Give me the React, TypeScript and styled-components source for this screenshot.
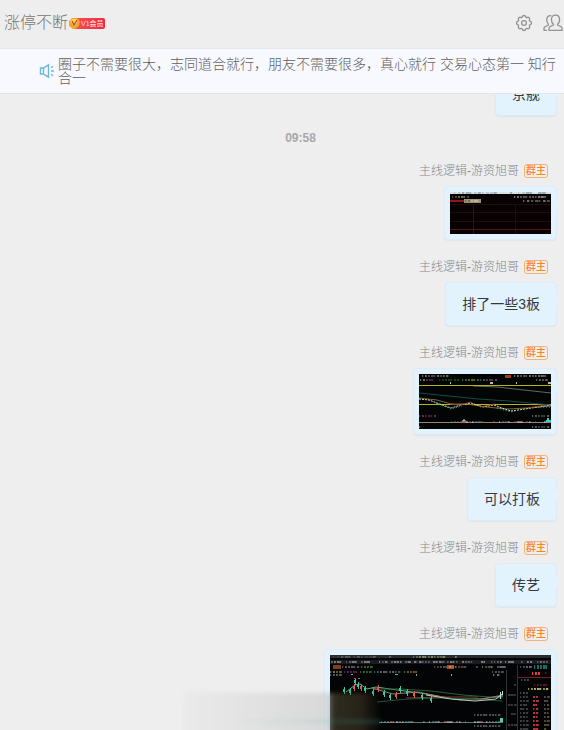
import React from "react";
import styled, { createGlobalStyle } from "styled-components";

const Global = createGlobalStyle`
  * { box-sizing: border-box; }
  body {
    margin: 0;
    background: #eeeeee;
    font-family: "Liberation Sans", "Noto Sans CJK SC", sans-serif;
  }
`;

const Page = styled.main`
  display: flex;
  flex-direction: column;
  height: 100vh;
  overflow: hidden;
`;

const Header = styled.header`
  display: flex;
  align-items: center;
  flex: none;
  height: 48px;
  padding: 0 1px 2px 4px;
`;

const Title = styled.h1`
  margin: 0;
  color: #757575;
  font-size: 16px;
  font-weight: 300;
  line-height: 24px;
`;

const Tools = styled.div`
  display: flex;
  align-items: center;
  gap: 10px;
  margin-left: auto;
`;

const IconButton = styled.button`
  display: flex;
  padding: 0;
  border: 0;
  background: none;
  color: #939393;
  cursor: pointer;
`;

const Vip = styled.span`
  display: flex;
  align-items: center;
  height: 11px;
  margin-left: 4px;
  padding: 0 1px 0 9px;
  border-radius: 2px;
  background: linear-gradient(90deg, #f8564a, #ee2746);
  color: #ffd9d6;
  font-size: 7px;
  font-weight: 500;
  line-height: 11px;
  position: relative;
`;

const VipCoin = styled.svg`
  position: absolute;
  left: -4px;
  top: 0;
`;

const Notice = styled.section`
  display: flex;
  align-items: center;
  flex: none;
  gap: 3px;
  min-height: 46px;
  padding: 0 4px 0 39px;
  border-top: 1px solid #e4e7f0;
  border-bottom: 1px solid #e2e5ec;
  background: #f8f9fe;
  color: #606060;
  font-size: 14px;
  font-weight: 300;
  line-height: 14px;

  svg { flex: none; }
  p { margin: 0; }
`;

const Feed = styled.section`
  flex: 1;
  min-height: 0;
  overflow: hidden;
`;

const Messages = styled.div`
  display: flex;
  flex-direction: column;
  align-items: flex-end;
  margin-top: -22px;
  padding-right: 7px;
`;

const Time = styled.time`
  align-self: center;
  margin: 12px 0 13px 44px;
  color: #a8a8aa;
  font-size: 12px;
  font-weight: 700;
  line-height: 20px;
`;

const Message = styled.article`
  display: flex;
  flex-direction: column;
  align-items: flex-end;
  margin-bottom: 17px;
`;

const Sender = styled.div`
  display: flex;
  align-items: center;
  gap: 5px;
  height: 20px;
  margin: 0 9px 5px 0;
  color: #85878b;
  font-size: 12px;
  font-weight: 300;
  line-height: 20px;
`;

const Owner = styled.span`
  padding: 0 1px;
  border: 1px solid #f7b177;
  border-radius: 3px;
  color: #fa861c;
  font-size: 10px;
  font-weight: 500;
  line-height: 12px;
`;

const Bubble = styled.div<{ $media?: boolean }>`
  position: relative;
  padding: ${(p) => (p.$media ? "5px" : "10px 16px")};
  border: 1px solid #dcebf5;
  border-radius: 4px;
  background: #e3f3fe;
  box-shadow: 0 1px 1px #e0e5e9;
  color: #333a40;
  font-size: 14px;
  font-weight: 400;
  line-height: 22px;

  &::after {
    content: "";
    position: absolute;
    top: 11px;
    left: 100%;
    border: 6px solid transparent;
    border-left-color: #e5f2fb;
    border-right: 0;
  }

  > svg { display: block; }
`;

const Haze = styled.div`
  position: absolute;
  top: 43px;
  left: -142px;
  width: 198px;
  height: 60px;
  background:
    linear-gradient(90deg, transparent 20%, rgba(60, 180, 165, 0.12) 60%, rgba(60, 180, 165, 0.3)) 0 27px / 100% 3px no-repeat,
    linear-gradient(90deg, rgba(205, 205, 205, 0.1), rgba(195, 195, 195, 0.5) 74%, rgba(90, 83, 55, 0.5) 76%, rgba(75, 65, 45, 0.5) 90%, transparent);
  filter: blur(2px);
`;

const noise = (n: number) => {
  const v = Math.sin(n * 91.7 + 4.3) * 4375.54;
  return v - Math.floor(v);
};

type TicksProps = {
  x: number; y: number; width: number; colors: string[];
  seed?: number; height?: number; gap?: number; opacity?: number;
};

function Ticks({ x, y, width, colors, seed = 0, height = 2, gap = 3, opacity = 0.5 }: TicksProps) {
  const marks = Array.from({ length: Math.floor(width / gap) }, (_, i) => i)
    .filter((i) => noise(i + seed) > 0.2);
  return (
    <g opacity={opacity}>
      {marks.map((i) => (
        <rect key={i} x={x + i * gap} y={y} width={1 + noise(i + seed + 30) * (gap - 1)} height={height}
          fill={colors[Math.floor(noise(i + seed + 9) * colors.length)]} />
      ))}
    </g>
  );
}

function GridChart() {
  return (
    <svg width="101" height="42" viewBox="0 0 101 42" role="img" aria-label="分时图">
      <rect width="101" height="42" fill="#060203" />
      <rect width="101" height="2" fill="#d8e3e8" />
      <Ticks x={4} y={0} width={94} colors={["#68747b", "#9eabb2"]} gap={4} />
      <Ticks x={2} y={4} width={18} colors={["#ccc", "#888"]} />
      <Ticks x={64} y={4} width={37} colors={["#aaa", "#c98", "#eee"]} />
      <rect y="8" width="14" height="2" fill="#8c1717" />
      <rect x="14" y="7" width="17" height="4" fill="#9a9477" />
      <Ticks x={15} y={8} width={15} colors={["#ded7b6", "#554f3e"]} />
      <Ticks x={73} y={8} width={28} colors={["#999", "#ccc"]} gap={4} />
      <g stroke="#2c0707" strokeWidth="1">
        <path d="M0 12.5H101M0 20.5H101M0 29.5H101M65.5 12V42" />
        <path d="M23.5 12V42" stroke="#430a0a" />
        <path d="M0 37.5H101" stroke="#641010" />
      </g>
    </svg>
  );
}

function LineChart() {
  return (
    <svg width="132" height="55" viewBox="0 0 132 55" role="img" aria-label="均线走势图">
      <rect width="132" height="55" fill="#030505" />
      <Ticks x={3} y={1} width={28} colors={["#888", "#ccc"]} />
      <rect x="86" y="1" width="6" height="3" fill="#a43c19" />
      <Ticks x={95} y={1} width={36} colors={["#999", "#ccc"]} />
      <Ticks x={1} y={5} width={16} colors={["#c427b0", "#ddd"]} />
      <Ticks x={20} y={5} width={22} colors={["#287e28"]} />
      <Ticks x={43} y={5} width={20} colors={["#b7bd40", "#67bd70"]} />
      <Ticks x={61} y={5} width={20} colors={["#c95c9b", "#54b4c7"]} />
      <Ticks x={117} y={5} width={14} colors={["#aaa"]} />
      <g fill="#bbb">
        <rect x="31" y="8" width="1" height="2" /><rect x="71" y="8" width="3" height="2" />
        <rect x="97" y="8" width="1" height="2" /><rect x="129" y="8" width="3" height="2" />
      </g>
      <g fill="none" strokeWidth="1">
        <path d="M54 12L78 13L105 16L132 19" stroke="#596b5f" />
        <path d="M0 11.5H132M0 30.5H132" stroke="#bab410" />
        <path d="M0 19L30 22L59 25L90 27L132 31" stroke="#124c50" />
        <path d="M0 24L18 26L32 30L48 30L67 33L88 35L108 34L132 32" stroke="#7d6929" />
        <path d="M0 25L10 26L18 29L32 34L42 31L52 29L64 33L75 31L83 34L92 37L106 35L119 33L132 31" stroke="#ccd8cc" strokeDasharray="2 1" />
        <path d="M17 29L32 35L43 32M78 34L92 38L104 35M121 33L132 33" stroke="#2bc9b5" strokeDasharray="1 2" />
        <path d="M31 30L41 31L52 28M61 33L76 30M109 34L127 31" stroke="#9b4637" />
      </g>
      <Ticks x={0} y={41} width={18} colors={["#9b2679", "#b75992"]} />
      <Ticks x={113} y={41} width={18} colors={["#777", "#aaa"]} />
      <rect y="48" width="132" height="1" fill="#9a8080" />
      <Ticks x={32} y={47} width={98} colors={["#b05555", "#d7d8d8", "#3f9991"]} />
      <path d="M43 47H47M44 46H46" stroke="#d6dcda" />
      <path d="M127 48V46H128V44H130V46H132V48Z" fill="#42cdd1" />
      <Ticks x={0} y={52} width={5} colors={["#bbb"]} />
      <Ticks x={113} y={52} width={18} colors={["#666", "#aaa"]} />
    </svg>
  );
}

const candles = [
  [14, 34], [20, 35], [24, 31], [25, 25], [28, 29], [31, 31], [35, 33], [43, 36], [48, 32],
  [54, 37], [60, 40], [66, 39], [70, 33], [77, 36], [84, 38], [92, 40], [101, 43],
];

function TerminalChart() {
  return (
    <svg width="221" height="116" viewBox="0 0 221 116" role="img" aria-label="行情软件截图">
      <rect width="221" height="116" fill="#030405" />
      <rect width="221" height="3" fill="#292b2c" />
      <Ticks x={3} y={1} width={66} colors={["#888", "#555"]} gap={4} />
      <Ticks x={83} y={1} width={50} colors={["#d2d4a2", "#96a070"]} />
      <rect y="5" width="221" height="4" fill="#181b1f" />
      {[1, 16, 31, 46, 61, 75, 89, 103, 117, 132, 145, 161, 175, 191, 207].map((x) => (
        <Ticks key={x} x={x} y={6} width={12} colors={["#ddd", "#999"]} seed={x} />
      ))}
      <rect x="3" y="10" width="8" height="4" fill="#7e4014" />
      <rect x="117" y="10" width="7" height="4" fill="#b34716" />
      <Ticks x={12} y={11} width={18} colors={["#aaa"]} />
      <Ticks x={31} y={11} width={13} colors={["#60bd38"]} />
      <Ticks x={104} y={11} width={75} colors={["#999", "#ccc", "#ad6848"]} />
      <Ticks x={0} y={16} width={13} colors={["#c5b33c", "#d9d9d9"]} />
      <Ticks x={14} y={16} width={16} colors={["#b62db1"]} />
      <Ticks x={30} y={16} width={13} colors={["#4abd4a"]} />
      <Ticks x={44} y={16} width={28} colors={["#bbb", "#37b5a6"]} />
      <Ticks x={74} y={16} width={16} colors={["#c9a03f"]} />
      <Ticks x={0} y={19} width={13} colors={["#aaa"]} />
      <g fill="#999">
        <rect x="21" y="19" width="2" height="1" /><rect x="65" y="19" width="3" height="1" />
        <rect x="86" y="19" width="1" height="2" /><rect x="121" y="19" width="1" height="2" />
      </g>
      <Ticks x={162} y={16} width={12} colors={["#999"]} />
      <Ticks x={163} y={19} width={10} colors={["#ccc"]} gap={4} />
      <g fill="none" strokeWidth="1">
        <path d="M16 37L25 30L30 29L37 34L46 32L60 34L90 38L125 44L150 44L173 41" stroke="#55b67c" />
        <path d="M44 34L70 34L101 36L133 40L173 43" stroke="#2b6137" />
        <path d="M42 33L63 39L88 37L112 42L130 45L152 44L173 40" stroke="#b06f70" />
        <path d="M47 47L78 44L110 43L172 46" stroke="#1c5731" />
        <path d="M76 43L113 42L148 42" stroke="#793a30" />
        <path d="M96 40L121 44L145 46L166 44L172 39" stroke="#b7cdbf" />
      </g>
      {candles.map(([x, y], i) => (
        <g key={i} fill={i % 3 === 2 ? "#df5b52" : "#39c9a6"}>
          <rect x={x} y={y - 2} width="1" height="7" />
          <rect x={x - 1} y={y} width="2" height="3" />
        </g>
      ))}
      <path d="M24 23.5H32" stroke="#c94f4f" strokeDasharray="2 2" />
      <path d="M170.5 37V44M172.5 36V40" stroke="#b6e2d6" />
      <Ticks x={144} y={59} width={29} colors={["#999"]} />
      <Ticks x={144} y={70} width={29} colors={["#999"]} />
      <rect x="49" y="67" width="124" height="1" fill="#597b78" />
      <Ticks x={51} y={66} width={122} colors={["#d78888", "#d8d8d8", "#42b3a5"]} />
      <path d="M171.5 63V67" stroke="#46ceb9" strokeWidth="3" />
      <path d="M176.5 15V116M187.5 10V116" stroke="#313436" />
      {[29, 39, 49, 58, 69, 77].map((y) => (
        <Ticks key={y} x={178} y={y} width={9} colors={["#6b6b6b"]} seed={y} />
      ))}
      <Ticks x={190} y={11} width={14} colors={["#ccc", "#888"]} />
      <Ticks x={204} y={10} width={16} colors={["#40d9d1"]} height={4} />
      <Ticks x={202} y={17} width={11} colors={["#ef3e45"]} height={3} opacity={1} />
      <Ticks x={215} y={17} width={5} colors={["#c33539"]} />
      <rect x="188" y="22" width="33" height="1" fill="#742020" />
      <Ticks x={191} y={24} width={10} colors={["#888"]} />
      <Ticks x={204} y={29} width={15} colors={["#b62b2f"]} />
      <Ticks x={198} y={33} width={22} colors={["#e4de88", "#a5b24d"]} opacity={0.8} />
      <Ticks x={190} y={37} width={11} colors={["#5ba361"]} />
      {Array.from({ length: 15 }, (_, i) => (
        <g key={i}>
          <Ticks x={190} y={41 + i * 4} width={9} colors={["#777"]} seed={i} />
          <Ticks x={203} y={41 + i * 4} width={7} colors={["#e54045"]} seed={i + 1} opacity={0.8} />
          <Ticks x={214} y={41 + i * 4} width={7} colors={i % 3 ? ["#a98e61"] : ["#888"]} seed={i + 2} />
        </g>
      ))}
    </svg>
  );
}

function GearIcon() {
  return (
    <svg width="18" height="18" viewBox="0 0 18 18" fill="none" stroke="currentColor" strokeWidth="1.3" strokeLinejoin="round">
      <path d="M7.2 3.2Q7.5 1.5 9 1.5T10.8 3.2L11.6 3.6Q13.2 2.8 14.2 3.8T14.4 6.4L14.8 7.2Q16.5 7.5 16.5 9T14.8 10.8L14.4 11.6Q15.2 13.2 14.2 14.2T11.6 14.4L10.8 14.8Q10.5 16.5 9 16.5T7.2 14.8L6.4 14.4Q4.8 15.2 3.8 14.2T3.6 11.6L3.2 10.8Q1.5 10.5 1.5 9T3.2 7.2L3.6 6.4Q2.8 4.8 3.8 3.8T6.4 3.6Z" />
      <circle cx="9" cy="9" r="2.4" />
    </svg>
  );
}

function MembersIcon() {
  return (
    <svg width="20" height="18" viewBox="0 0 20 18" fill="none" stroke="currentColor" strokeWidth="1.3" strokeLinejoin="round">
      <path d="M10.5 10.2Q8.4 8.6 8.4 5.8Q8.4 1.2 12.5 1.2T16.6 5.8Q16.6 8.6 14.5 10.2V11L18 12.7Q19 13.3 19 14.5V16.4H6V14.5Q6 13.3 7 12.7L10.5 11Z" />
      <path d="M8.4 1.8Q3.8 1 3.7 5.8Q3.7 8.4 5.4 10.2V11L2.2 12.7Q1 13.3 1 14.5V16.4H4" />
    </svg>
  );
}

function SpeakerIcon() {
  return (
    <svg width="16" height="16" viewBox="0 0 16 16" fill="none" stroke="#6eb7d5" strokeWidth="1.4">
      <path d="M1.5 5H4.5L9.5 1.8V14.2L4.5 11H1.5ZM4.5 5V11" />
      <path d="M12 4.8L14 3.3M12 8H15M12 11.2L14 12.7" />
    </svg>
  );
}

type Item = { text?: string; chart?: React.ReactNode; hazy?: boolean };

const items: Item[] = [
  { chart: <GridChart /> },
  { text: "排了一些3板" },
  { chart: <LineChart /> },
  { text: "可以打板" },
  { text: "传艺" },
  { chart: <TerminalChart />, hazy: true },
];

export default function App() {
  return (
    <Page>
      <Global />
      <Header>
        <Title>涨停不断</Title>
        <Vip>
          <VipCoin width="13" height="11" viewBox="0 0 13 11">
            <path d="M1 3L4 0H9L12 3L11 8L7 11H5L1 8Z" fill="#f7a32f" />
            <path d="M2 3L5 1H8L10 3L6 9Z" fill="#ffd65f" />
            <path d="M4 3L6 7L9 2" fill="none" stroke="#bd5425" strokeWidth="1.4" />
          </VipCoin>
          V1会员
        </Vip>
        <Tools>
          <IconButton aria-label="设置"><GearIcon /></IconButton>
          <IconButton aria-label="成员"><MembersIcon /></IconButton>
        </Tools>
      </Header>
      <Notice>
        <SpeakerIcon />
        <p>圈子不需要很大，志同道合就行，朋友不需要很多，真心就行 交易心态第一 知行合一</p>
      </Notice>
      <Feed>
        <Messages>
          <Bubble>京舰</Bubble>
          <Time>09:58</Time>
          {items.map((item, i) => (
            <Message key={i}>
              <Sender>
                主线逻辑-游资旭哥<Owner>群主</Owner>
              </Sender>
              <Bubble $media={!!item.chart}>
                {item.chart ?? item.text}
                {item.hazy && <Haze />}
              </Bubble>
            </Message>
          ))}
        </Messages>
      </Feed>
    </Page>
  );
}
